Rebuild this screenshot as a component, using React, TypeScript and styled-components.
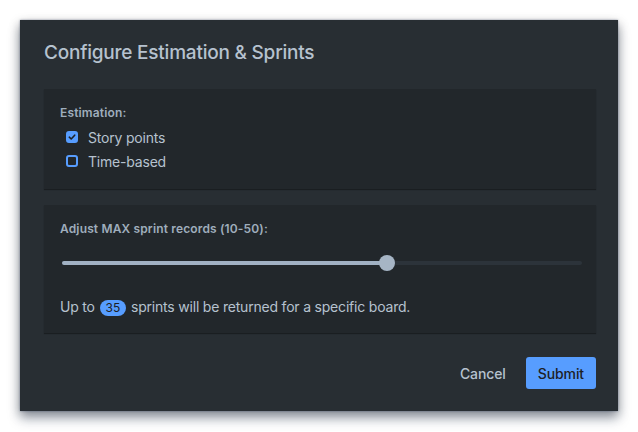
import React, { useState } from 'react';
import styled, { createGlobalStyle } from 'styled-components';

const GlobalStyle = createGlobalStyle`
  html, body {
    margin: 0;
    padding: 0;
    background: #ffffff;
  }
  body {
    font-family: Inter, "Noto Sans", "Liberation Sans", sans-serif;
    -webkit-font-smoothing: antialiased;
  }
`;

const MIN = 10;
const MAX = 50;

const Check = () => (
  <svg width="8" height="8" viewBox="0 0 8 8">
    <path d="M1.3 4.2 L3.2 6 L6.7 2.2" fill="none" stroke="#1D2125" strokeWidth="1.6" strokeLinecap="round" strokeLinejoin="round" />
  </svg>
);

export default function App() {
  const [points, setPoints] = useState(true);
  const [timeBased, setTimeBased] = useState(false);
  const [records, setRecords] = useState(35);
  const percent = ((records - MIN) / (MAX - MIN)) * 100;

  return (
    <>
      <GlobalStyle />
      <Page>
        <Dialog>
          <Title>Configure Estimation &amp; Sprints</Title>
          <Body>
            <Panel>
              <Label>Estimation:</Label>
              <Options>
                <Option onClick={() => setPoints(!points)}>
                  <Box $checked={points}>{points && <Check />}</Box>
                  Story points
                </Option>
                <Option onClick={() => setTimeBased(!timeBased)}>
                  <Box $checked={timeBased}>{timeBased && <Check />}</Box>
                  Time-based
                </Option>
              </Options>
            </Panel>
            <Panel>
              <Label>Adjust MAX sprint records (10-50):</Label>
              <SliderWrap>
                <Track>
                  <Fill style={{ width: `${percent}%` }} />
                  <Thumb style={{ left: `${percent}%` }} />
                </Track>
                <RangeInput
                  type="range"
                  min={MIN}
                  max={MAX}
                  value={records}
                  onChange={(e) => setRecords(Number(e.target.value))}
                />
              </SliderWrap>
              <Summary>
                Up to <Badge>{records}</Badge> sprints will be returned for a specific board.
              </Summary>
            </Panel>
          </Body>
          <Footer>
            <GhostButton>Cancel</GhostButton>
            <PrimaryButton>Submit</PrimaryButton>
          </Footer>
        </Dialog>
      </Page>
    </>
  );
}

const Page = styled.div`
  padding: 20px;
`;

const Dialog = styled.div`
  width: 598px;
  box-sizing: border-box;
  padding: 21px 22px 22px 24px;
  background: #282e33;
  box-shadow: 0 8px 12px rgba(9, 30, 66, 0.25), 0 0 2px rgba(9, 30, 66, 0.4), 0 4px 10px rgba(0, 0, 0, 0.35);
`;

const Title = styled.h1`
  margin: 0;
  font-size: 19px;
  line-height: 24px;
  font-weight: 500;
  color: #b6c2cf;
  letter-spacing: -0.22px;
`;

const Body = styled.div`
  display: flex;
  flex-direction: column;
  gap: 16px;
  margin-top: 24px;
`;

const Panel = styled.section`
  background: #22272b;
  padding: 16px;
  box-shadow: 0 1px 1px rgba(0, 0, 0, 0.35);
  display: flex;
  flex-direction: column;
`;

const Label = styled.div`
  font-size: 12px;
  line-height: 16px;
  font-weight: 600;
  color: #9fadbc;
  letter-spacing: 0.15px;
`;

const Options = styled.div`
  display: flex;
  flex-direction: column;
  margin-top: 4px;
  padding-left: 6px;
`;

const Option = styled.label`
  display: flex;
  align-items: center;
  gap: 10px;
  height: 24px;
  font-size: 14px;
  color: #b6c2cf;
  letter-spacing: -0.2px;
  cursor: pointer;
`;

const Box = styled.span<{ $checked: boolean }>`
  width: 12px;
  height: 12px;
  box-sizing: border-box;
  border-radius: 3px;
  border: 2px solid #579dff;
  background: ${(p) => (p.$checked ? '#579dff' : 'transparent')};
  display: flex;
  align-items: center;
  justify-content: center;
`;

const SliderWrap = styled.div`
  position: relative;
  height: 22px;
  margin: 15px -2px 0 2px;
  display: flex;
  align-items: center;
`;

const Track = styled.div`
  position: relative;
  width: 100%;
  height: 4px;
  border-radius: 2px;
  background: #2c333a;
`;

const Fill = styled.div`
  height: 100%;
  border-radius: 2px;
  background: #a1b1c3;
`;

const Thumb = styled.div`
  position: absolute;
  top: 50%;
  width: 16px;
  height: 16px;
  border-radius: 50%;
  background: #a6b5c5;
  transform: translate(-50%, -50%);
`;

const RangeInput = styled.input`
  position: absolute;
  inset: 0;
  width: 100%;
  margin: 0;
  opacity: 0;
  cursor: pointer;
`;

const Summary = styled.p`
  margin: 23px 0 0;
  font-size: 14px;
  line-height: 20px;
  color: #b6c2cf;
  letter-spacing: -0.2px;
`;

const Badge = styled.span`
  display: inline-block;
  padding: 0 6px;
  margin: 0 1px;
  border-radius: 8px;
  background: #579dff;
  color: #1d2125;
  font-size: 12px;
  line-height: 16px;
  letter-spacing: 0;
`;

const Footer = styled.div`
  display: flex;
  justify-content: flex-end;
  align-items: center;
  gap: 8px;
  margin-top: 24px;
`;

const ButtonBase = styled.button`
  font-family: inherit;
  font-size: 14px;
  font-weight: 500;
  height: 32px;
  padding: 0 12px;
  border: none;
  border-radius: 3px;
  letter-spacing: -0.1px;
  cursor: pointer;
`;

const GhostButton = styled(ButtonBase)`
  background: transparent;
  color: #b6c2cf;
`;

const PrimaryButton = styled(ButtonBase)`
  background: #579dff;
  color: #1d2125;
`;
